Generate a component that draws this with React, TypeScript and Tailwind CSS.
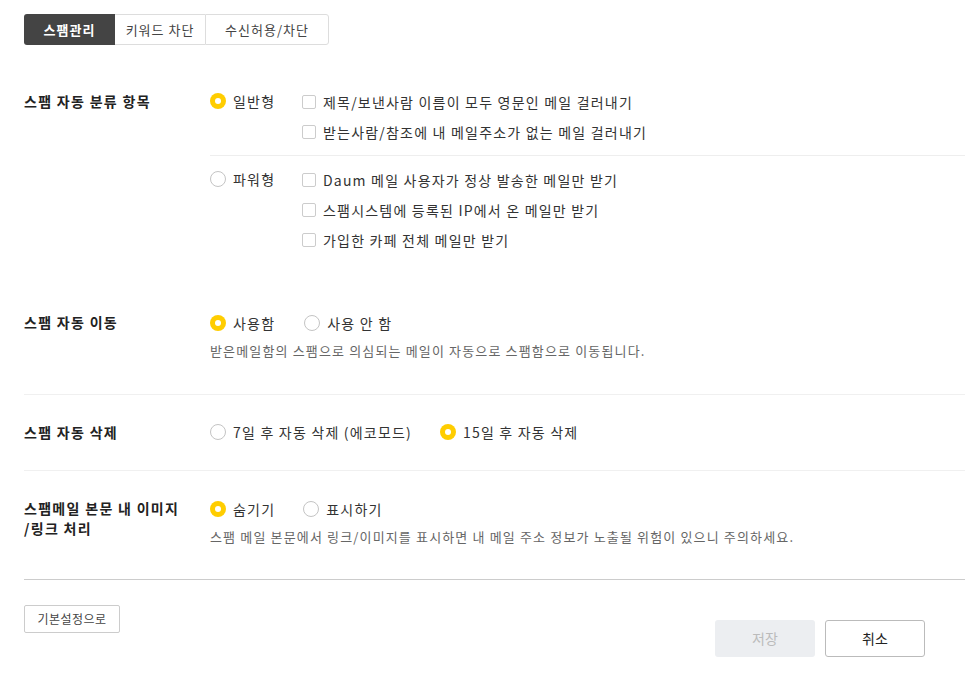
import React from "react";

const font = { fontFamily: '"Noto Sans CJK KR", "Noto Sans", sans-serif' };

function Radio({ checked, label }: { checked?: boolean; label: string }) {
  return (
    <div className="flex items-center h-[20px]">
      {checked ? (
        <span className="w-[16px] h-[16px] rounded-full bg-[#ffcd00] flex items-center justify-center shrink-0">
          <span className="w-[6px] h-[6px] rounded-full bg-white" />
        </span>
      ) : (
        <span className="w-[16px] h-[16px] rounded-full border border-[#c4c4c4] bg-white shrink-0" />
      )}
      <span className="ml-[7px] text-[14px] leading-[20px] tracking-[1.2px] text-[#333]">{label}</span>
    </div>
  );
}

function Check({ label }: { label: string }) {
  return (
    <div className="flex items-center h-[20px]">
      <span className="w-[14px] h-[14px] rounded-[2px] border border-[#cccccc] bg-white shrink-0" />
      <span className="ml-[7px] text-[14px] leading-[20px] tracking-[1.2px] text-[#333]">{label}</span>
    </div>
  );
}

export default function App() {
  return (
    <div className="bg-white w-[965px] h-[687px] pl-[24px] overflow-hidden" style={font}>
      {/* Tabs */}
      <div className="flex mt-[14px] h-[31px] w-[305px]">
        <div className="w-[91px] h-full bg-[#444] rounded-l-[3px] flex items-center justify-center text-white text-[13px] tracking-[1px] font-bold">
          스팸관리
        </div>
        <div className="w-[90px] h-full border-y border-[#ddd] flex items-center justify-center text-[13px] tracking-[1px] text-[#444]">
          키워드 차단
        </div>
        <div className="w-[124px] h-full border border-[#ddd] rounded-r-[3px] flex items-center justify-center text-[13px] tracking-[1px] text-[#444]">
          수신허용/차단
        </div>
      </div>

      {/* Section 1 */}
      <div className="flex mt-[46px]">
        <div className="w-[186px] text-[14px] leading-[20px] tracking-[1.3px] font-bold text-[#222]">스팸 자동 분류 항목</div>
        <div className="flex-1 flex flex-col">
          <div className="flex">
            <div className="w-[92px]">
              <Radio checked label="일반형" />
            </div>
            <div className="flex flex-col gap-[10px] mt-[1px]">
              <Check label="제목/보낸사람 이름이 모두 영문인 메일 걸러내기" />
              <Check label="받는사람/참조에 내 메일주소가 없는 메일 걸러내기" />
            </div>
          </div>
          <div className="h-px bg-[#eee] mt-[13px]" />
          <div className="flex mt-[13px]">
            <div className="w-[92px]">
              <Radio label="파워형" />
            </div>
            <div className="flex flex-col gap-[10px] mt-[1px]">
              <Check label="Daum 메일 사용자가 정상 발송한 메일만 받기" />
              <Check label="스팸시스템에 등록된 IP에서 온 메일만 받기" />
              <Check label="가입한 카페 전체 메일만 받기" />
            </div>
          </div>
        </div>
      </div>

      {/* Section 2 */}
      <div className="flex mt-[62px]">
        <div className="w-[186px] text-[14px] leading-[20px] tracking-[1.3px] font-bold text-[#222]">스팸 자동 이동</div>
        <div className="flex-1 flex flex-col">
          <div className="flex gap-[29px] mt-[1px]">
            <Radio checked label="사용함" />
            <Radio label="사용 안 함" />
          </div>
          <div className="mt-[8px] text-[13px] leading-[20px] tracking-[1.15px] text-[#666]">
            받은메일함의 스팸으로 의심되는 메일이 자동으로 스팸함으로 이동됩니다.
          </div>
        </div>
      </div>
      <div className="h-px bg-[#f0f0f0] mt-[33px]" />

      {/* Section 3 */}
      <div className="flex pt-[27px] pb-[28px]">
        <div className="w-[186px] text-[14px] leading-[20px] tracking-[1.3px] font-bold text-[#222]">스팸 자동 삭제</div>
        <div className="flex gap-[28px]">
          <Radio label="7일 후 자동 삭제 (에코모드)" />
          <Radio checked label="15일 후 자동 삭제" />
        </div>
      </div>
      <div className="h-px bg-[#f0f0f0]" />

      {/* Section 4 */}
      <div className="flex pt-[28px]">
        <div className="w-[186px] text-[14px] leading-[20px] tracking-[1.3px] font-bold text-[#222] -mt-[1px]">
          <div>스팸메일 본문 내 이미지</div>
          <div>/링크 처리</div>
        </div>
        <div className="flex-1 flex flex-col">
          <div className="flex gap-[28px]">
            <Radio checked label="숨기기" />
            <Radio label="표시하기" />
          </div>
          <div className="mt-[8px] text-[13px] leading-[20px] tracking-[1.15px] text-[#666]">
            스팸 메일 본문에서 링크/이미지를 표시하면 내 메일 주소 정보가 노출될 위험이 있으니 주의하세요.
          </div>
        </div>
      </div>
      <div className="h-px bg-[#ccc] mt-[32px]" />

      {/* Footer */}
      <div className="flex justify-between items-start mt-[25px]">
        <button className="w-[96px] h-[28px] border border-[#ccc] rounded-[2px] bg-white text-[12px] tracking-[0.5px] text-[#444] flex items-center justify-center">
          기본설정으로
        </button>
        <div className="flex gap-[10px] mt-[15px] mr-[40px]">
          <button className="w-[100px] h-[37px] rounded-[3px] bg-[#eceef1] text-[14px] text-[#bbb] flex items-center justify-center">
            저장
          </button>
          <button className="w-[100px] h-[37px] rounded-[3px] border border-[#bbb] bg-white text-[14px] text-[#222] flex items-center justify-center">
            취소
          </button>
        </div>
      </div>
    </div>
  );
}
